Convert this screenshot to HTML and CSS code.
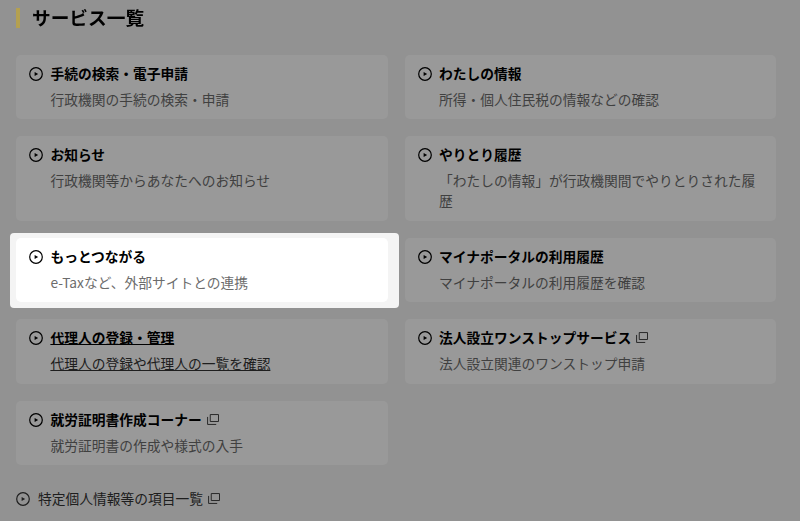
FILE: index.html
```html
<!DOCTYPE html>
<html lang="ja">
  <head>
    <meta charset="UTF-8" />
    <meta name="viewport" content="width=device-width, initial-scale=1.0" />
    <title>サービス一覧</title>
    <link rel="stylesheet" href="styles.css">
  </head>
  <body>
    <svg class="defs" width="0" height="0">
      <symbol id="play" viewBox="0 0 14 14">
        <circle cx="7" cy="7" r="6.3" fill="none" stroke="currentColor" stroke-width="1.2" />
        <path d="M5.6 4.9 9.2 7 5.6 9.1z" fill="currentColor" />
      </symbol>
      <symbol id="ext" viewBox="0 0 13 12">
        <path d="M3.5 .6h9v7.6h-9z M.6 3.2v8.2h9.4" fill="none" stroke="currentColor" stroke-width="1" />
      </symbol>
    </svg>

    <div class="wrapper">
      <h2 class="heading">サービス一覧</h2>

      <div class="services">
        <a class="card">
          <div class="title"><svg class="play"><use href="#play" /></svg><span>手続の検索・電子申請</span></div>
          <p class="desc">行政機関の手続の検索・申請</p>
        </a>
        <a class="card">
          <div class="title"><svg class="play"><use href="#play" /></svg><span>わたしの情報</span></div>
          <p class="desc">所得・個人住民税の情報などの確認</p>
        </a>
        <a class="card">
          <div class="title"><svg class="play"><use href="#play" /></svg><span>お知らせ</span></div>
          <p class="desc">行政機関等からあなたへのお知らせ</p>
        </a>
        <a class="card">
          <div class="title"><svg class="play"><use href="#play" /></svg><span>やりとり履歴</span></div>
          <p class="desc">「わたしの情報」が行政機関間でやりとりされた履歴</p>
        </a>
        <a class="card active">
          <div class="title"><svg class="play"><use href="#play" /></svg><span>もっとつながる</span></div>
          <p class="desc">e-Taxなど、外部サイトとの連携</p>
        </a>
        <a class="card">
          <div class="title"><svg class="play"><use href="#play" /></svg><span>マイナポータルの利用履歴</span></div>
          <p class="desc">マイナポータルの利用履歴を確認</p>
        </a>
        <a class="card hovered">
          <div class="title"><svg class="play"><use href="#play" /></svg><span>代理人の登録・管理</span></div>
          <p class="desc">代理人の登録や代理人の一覧を確認</p>
        </a>
        <a class="card">
          <div class="title"><svg class="play"><use href="#play" /></svg><span>法人設立ワンストップサービス</span><svg class="ext"><use href="#ext" /></svg></div>
          <p class="desc">法人設立関連のワンストップ申請</p>
        </a>
        <a class="card">
          <div class="title"><svg class="play"><use href="#play" /></svg><span>就労証明書作成コーナー</span><svg class="ext"><use href="#ext" /></svg></div>
          <p class="desc">就労証明書の作成や様式の入手</p>
        </a>
      </div>

      <a class="more"><svg class="play"><use href="#play" /></svg><span>特定個人情報等の項目一覧</span><svg class="ext"><use href="#ext" /></svg></a>
    </div>

    <div class="overlay"></div>
  </body>
</html>
```

FILE: styles.css
```css
* { box-sizing: border-box; font-family: 'Noto Sans CJK JP', 'Noto Sans', sans-serif; }
html, body { height: 100%; }
body { margin: 0; background: #f4f4f4; color: #000; overflow: hidden; }

.defs { position: absolute; }

.wrapper { padding: 8px 24px 0 16.4px; }

/* sits above the overlay so the bar keeps its colour */
.heading {
  position: relative;
  z-index: 2;
  margin: 0 0 26.6px;
  padding: 0 0 2px 11.6px;
  border-left: 4px solid #b4a050;
  font-size: 18.7px;
  line-height: 18px;
  font-weight: 700;
}

.services {
  display: grid;
  grid-template-columns: 371.6px 371px;
  grid-auto-rows: min-content;
  column-gap: 17px;
  row-gap: 17px;
}

.card {
  display: block;
  position: relative;
  padding: 8px 16px 10.5px 12.6px;
  background: #fff;
  border-radius: 5px;
}

.card.active { z-index: 2; }
.card.active::before {
  content: '';
  position: absolute;
  z-index: -1;
  inset: -4.5px -11px -5.5px -6.5px;
  background: #f4f4f4;
  border-radius: 4px;
}
.card.active::after {
  content: '';
  position: absolute;
  z-index: -1;
  inset: 0;
  background: #fff;
  border-radius: 5px;
}

.title {
  display: flex;
  align-items: center;
  font-size: 13.75px;
  line-height: 20px;
  font-weight: 700;
}

.play { flex: none; width: 14px; height: 14px; margin: 2px 7.4px 0 0; }
.ext { flex: none; width: 12px; height: 11px; margin: 1px 0 0 5px; color: #333; }

.desc {
  margin: 6px 0 0 21.4px;
  font-size: 13.75px;
  line-height: 20px;
  color: #6c6c6c;
}

.hovered .title span, .hovered .desc { text-decoration: underline; }
.hovered .desc { color: #333; }

.more {
  display: flex;
  align-items: center;
  margin-top: 22.5px;
  font-size: 13.75px;
  line-height: 20px;
  color: #333;
}
.more .play { margin-right: 7.6px; }

.overlay {
  position: fixed;
  inset: 0;
  z-index: 1;
  background: rgba(0, 0, 0, .4);
}
```
